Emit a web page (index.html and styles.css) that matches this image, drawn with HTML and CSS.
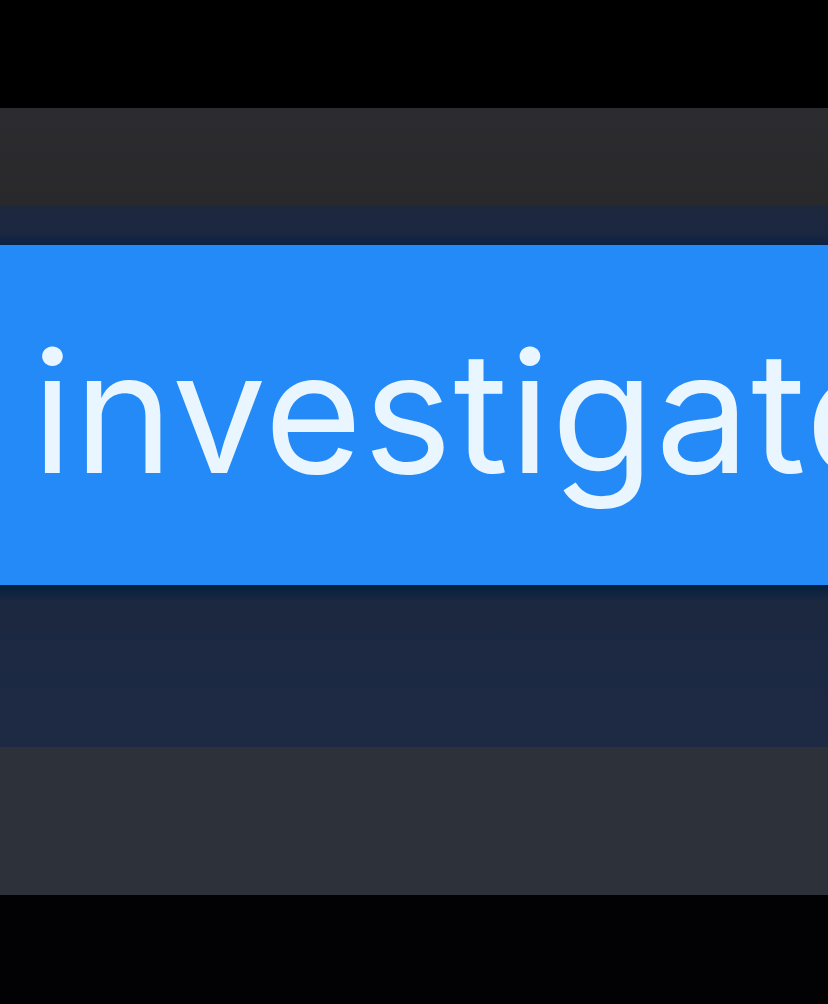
FILE: index.html
```html
<!DOCTYPE html>
<html lang="en">
<head>
<meta charset="utf-8">
<title>investigate</title>
<link rel="stylesheet" href="styles.css">
</head>
<body>
<div class="screen">
  <div class="band band-top"></div>
  <div class="band band-gray-upper"></div>
  <div class="band band-navy-upper"></div>
  <div class="band band-highlight"><span class="word">investigate</span></div>
  <div class="band band-navy-lower"></div>
  <div class="band band-gray-lower"></div>
  <div class="band band-bottom"></div>
</div>
</body>
</html>
```
FILE: styles.css
```css
html, body {
  margin: 0;
  padding: 0;
  background: #000;
}
.screen {
  width: 828px;
  height: 1004px;
  overflow: hidden;
  display: flex;
  flex-direction: column;
}
.band {
  flex: none;
  width: 100%;
}
.band-top {
  height: 108px;
  background: #000;
}
.band-gray-upper {
  height: 97px;
  background: linear-gradient(#2c2c30, #29292c);
}
.band-navy-upper {
  height: 40px;
  background: linear-gradient(#1d283e 0%, #1b2740 70%, #0b2244 100%);
}
.band-highlight {
  height: 340px;
  box-sizing: border-box;
  background: #238af8;
  padding: 83px 0 0 32px;
  overflow: hidden;
  white-space: nowrap;
}
.word {
  display: block;
  font-family: Inter, "Liberation Sans", sans-serif;
  font-size: 168px;
  line-height: 1;
  font-weight: 400;
  color: #eaf6ff;
  letter-spacing: 1.2px;
}
.band-navy-lower {
  height: 162px;
  background: linear-gradient(#03203f 0px, #1b2840 16px, #1e2a44 100%);
}
.band-gray-lower {
  height: 148px;
  background: #2c313a;
}
.band-bottom {
  height: 109px;
  background: #020205;
}
```
